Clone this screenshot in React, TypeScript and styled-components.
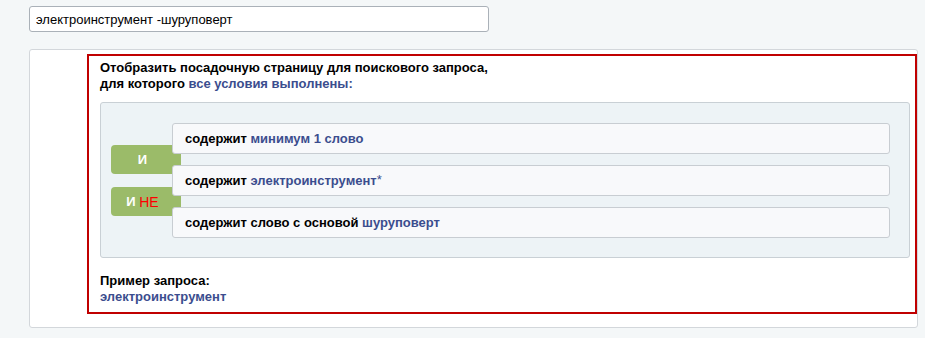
import React from 'react';
import styled, { createGlobalStyle } from 'styled-components';

const GlobalStyle = createGlobalStyle`
  html, body {
    margin: 0;
    padding: 0;
    background: #f4f7f8;
    font-family: "Liberation Sans", Arial, sans-serif;
    font-size: 13px;
    color: #000000;
  }
`;

type Condition = { lead: string; value: string; mark?: string };

const conditions: Condition[] = [
  { lead: 'содержит ', value: 'минимум 1 слово' },
  { lead: 'содержит ', value: 'электроинструмент', mark: '*' },
  { lead: 'содержит слово с основой ', value: 'шуруповерт' },
];

const App = () => {
  return (
    <Page>
      <GlobalStyle />
      <QueryInput readOnly value="электроинструмент -шуруповерт" />
      <Card>
        <Highlight>
          <Heading>
            Отобразить посадочную страницу для поискового запроса,
            <br />
            для которого <Accent>все условия выполнены:</Accent>
          </Heading>
          <RulesPanel>
            <RulesList>
              <Badge $top={22}>И</Badge>
              <Badge $top={64}>
                И <Negation>НЕ</Negation>
              </Badge>
              {conditions.map((c) => (
                <RuleRow key={c.value}>
                  {c.lead}
                  <Accent>{c.value}</Accent>
                  {c.mark && <Wildcard>{c.mark}</Wildcard>}
                </RuleRow>
              ))}
            </RulesList>
          </RulesPanel>
          <Example>
            Пример запроса:
            <br />
            <Accent>электроинструмент</Accent>
          </Example>
        </Highlight>
      </Card>
    </Page>
  );
};

const Page = styled.div`
  padding: 6px 7px 10px 29px;
`;

const QueryInput = styled.input`
  display: block;
  box-sizing: border-box;
  width: 460px;
  height: 26px;
  margin: 0 0 17px;
  padding: 0 6px;
  border: 1px solid #aab1b8;
  border-radius: 3px;
  background: #ffffff;
  font-family: "Liberation Sans", Arial, sans-serif;
  font-size: 13px;
  color: #000000;
  outline: none;
`;

const Card = styled.div`
  background: #ffffff;
  border: 1px solid #d3d7db;
  border-radius: 3px;
  padding: 4px 0 13px 57px;
`;

const Highlight = styled.div`
  border: 2px solid #c00000;
  padding: 4px 5px 7px 11px;
`;

const Heading = styled.div`
  font-weight: bold;
  line-height: 16px;
  margin-bottom: 10px;
`;

const Accent = styled.span`
  color: #3b4d8e;
  font-weight: bold;
`;

const Wildcard = styled.span`
  color: #3b4d8e;
  font-weight: normal;
  position: relative;
  top: -1px;
`;

const RulesPanel = styled.div`
  box-sizing: border-box;
  width: 810px;
  background: #edf3f6;
  border: 1px solid #c9d0d5;
  border-radius: 3px;
  padding: 20px 19px 19px 71px;
`;

const RulesList = styled.div`
  position: relative;
  display: flex;
  flex-direction: column;
  gap: 11px;
`;

const RuleRow = styled.div`
  position: relative;
  z-index: 1;
  box-sizing: border-box;
  height: 31px;
  display: flex;
  align-items: center;
  padding: 0 12px;
  background: #f8f9fb;
  border: 1px solid #c8cdd2;
  border-radius: 3px;
  font-weight: bold;
  white-space: pre;
`;

const Badge = styled.div<{ $top: number }>`
  position: absolute;
  left: -61px;
  top: ${(p) => p.$top}px;
  width: 70px;
  height: 29px;
  box-sizing: border-box;
  padding: 0 10px 0 3px;
  display: flex;
  align-items: center;
  justify-content: center;
  background: #9bbb69;
  border-radius: 4px;
  color: #ffffff;
  font-weight: bold;
  font-size: 13px;
  white-space: pre;
`;

const Negation = styled.span`
  color: #ff0000;
  font-weight: normal;
  font-size: 14px;
`;

const Example = styled.div`
  font-weight: bold;
  line-height: 16px;
  margin-top: 15px;
`;

export default App;
